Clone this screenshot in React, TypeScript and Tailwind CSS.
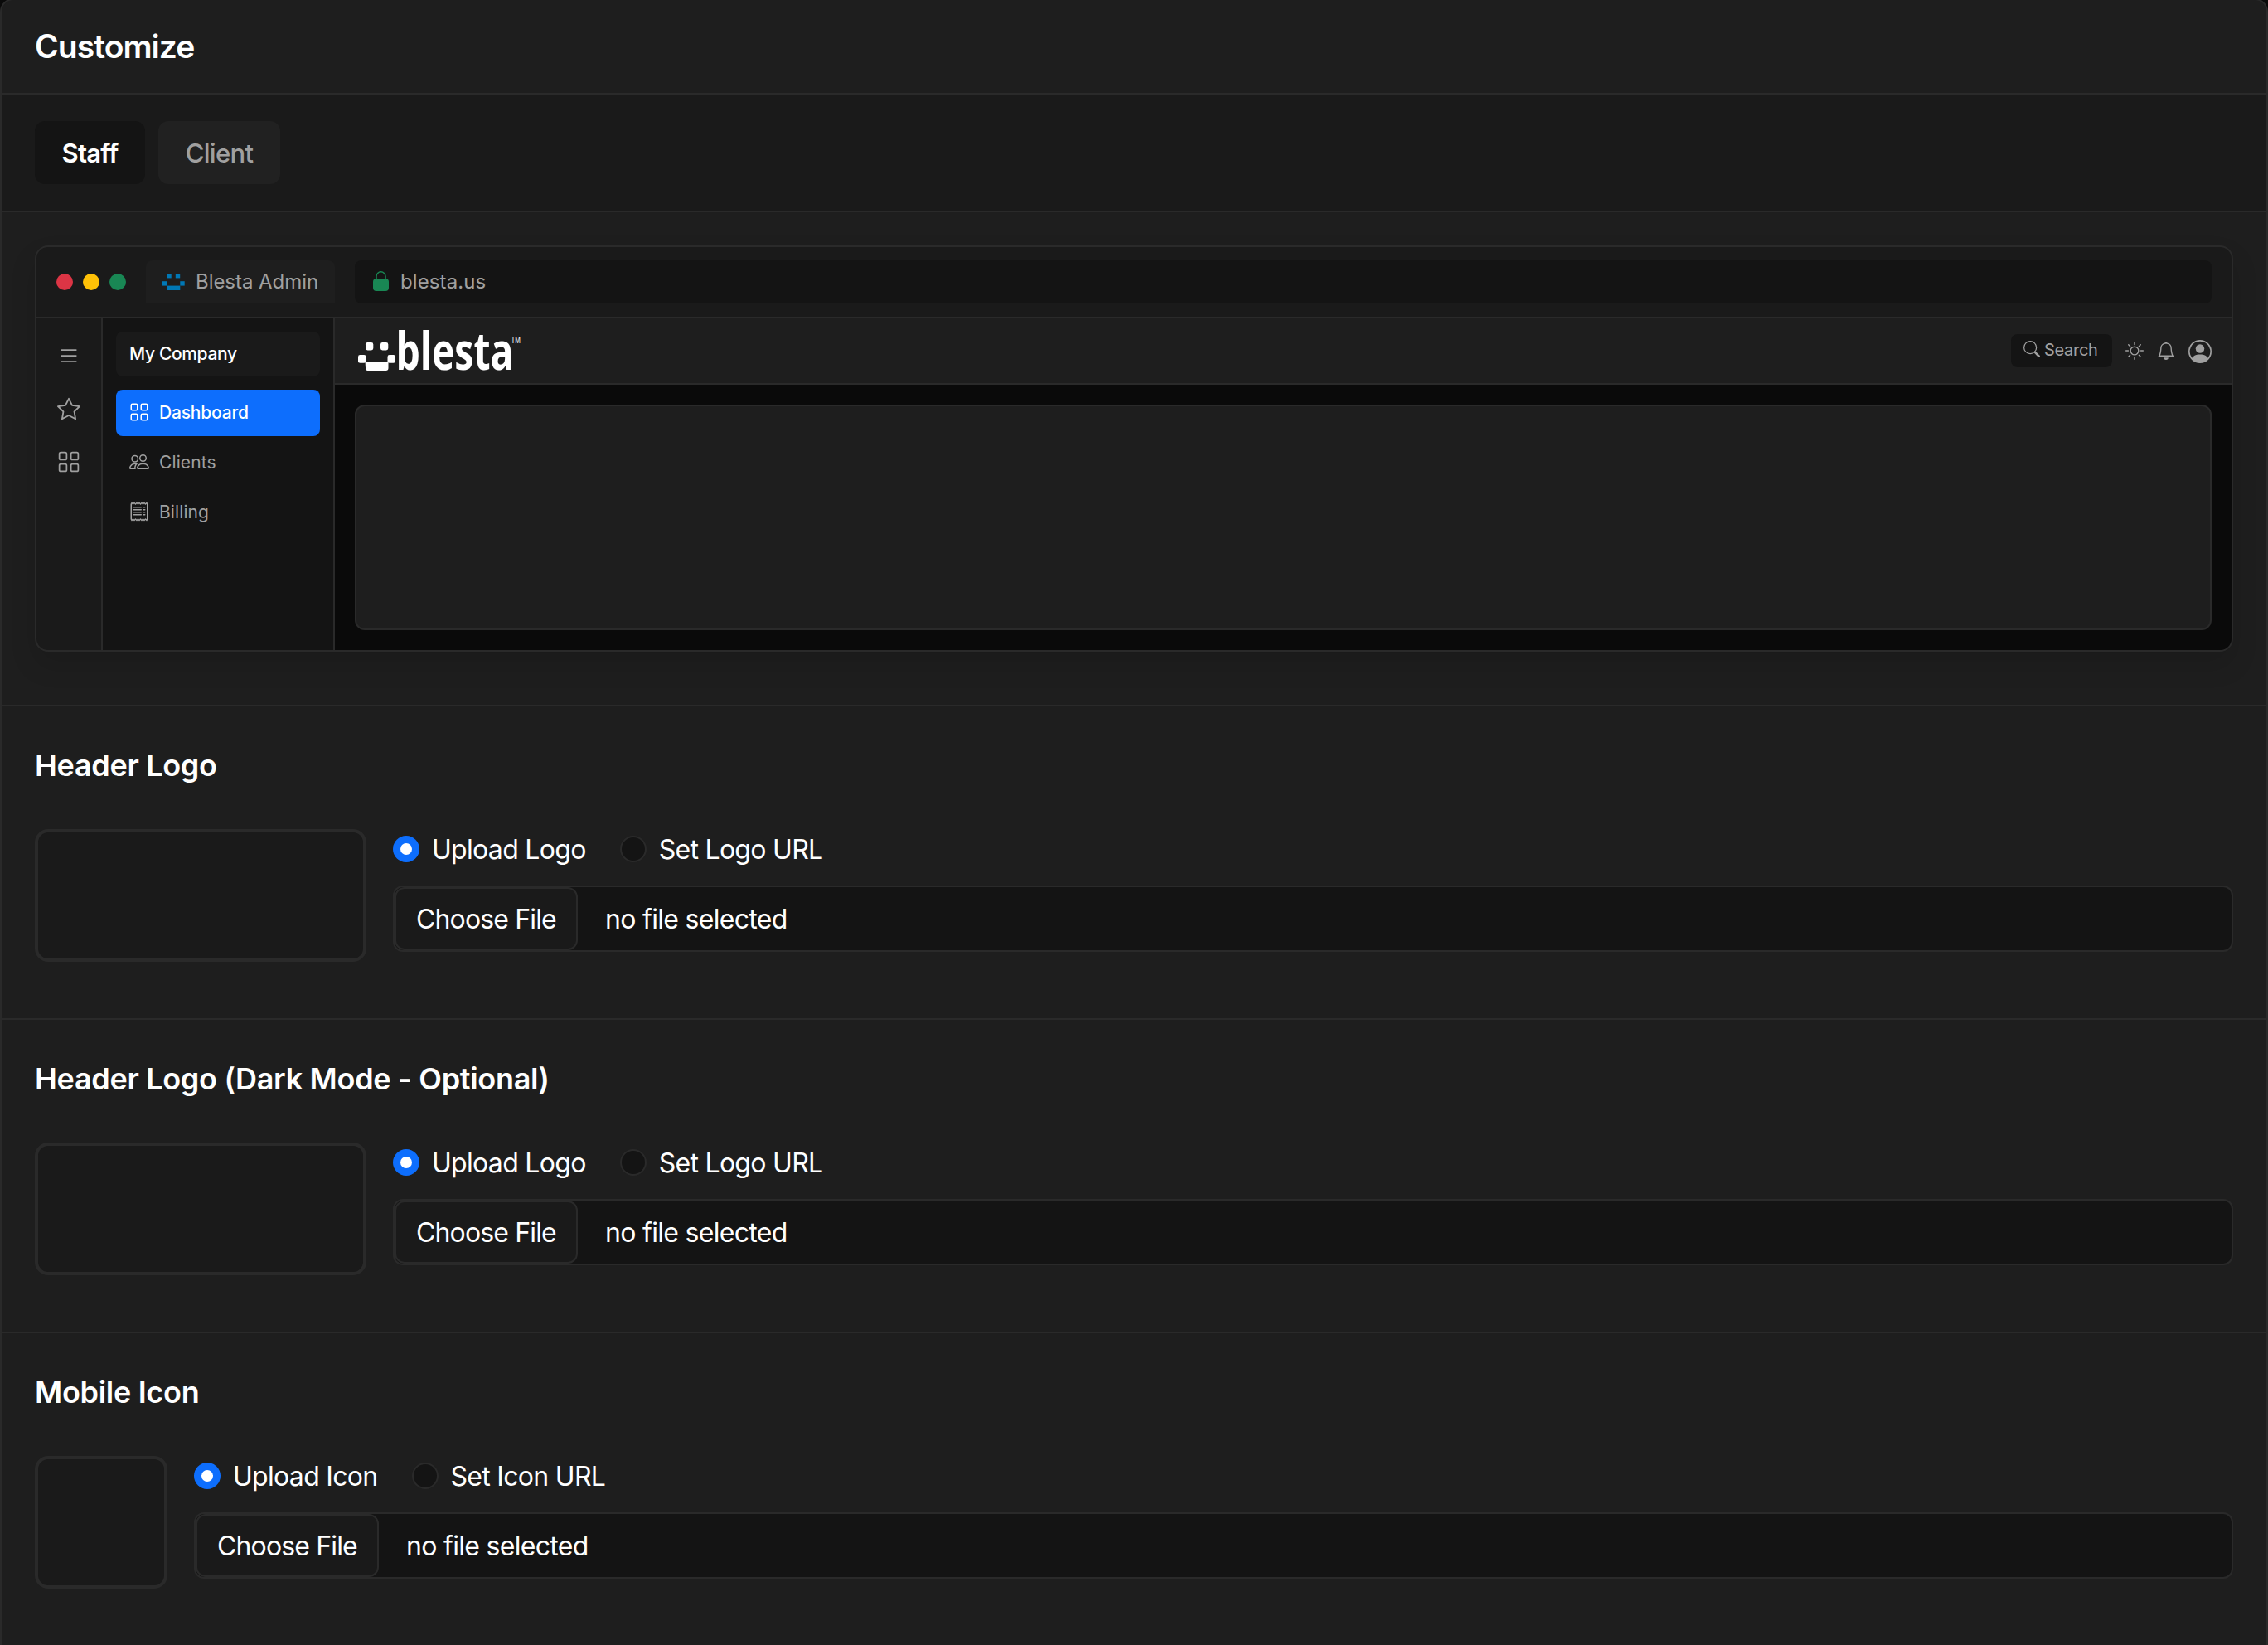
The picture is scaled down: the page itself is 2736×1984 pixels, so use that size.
import React from "react";
import {
  BsBell,
  BsGrid,
  BsList,
  BsPeople,
  BsPersonCircle,
  BsReceipt,
  BsStar,
  BsSun,
} from "react-icons/bs";

type UploadSection = {
  title: string;
  name: string;
  upload: string;
  url: string;
  square?: boolean;
};

const sections: UploadSection[] = [
  { title: "Header Logo", name: "logo", upload: "Upload Logo", url: "Set Logo URL" },
  {
    title: "Header Logo (Dark Mode - Optional)",
    name: "logo_dark",
    upload: "Upload Logo",
    url: "Set Logo URL",
  },
  { title: "Mobile Icon", name: "icon", upload: "Upload Icon", url: "Set Icon URL", square: true },
];

const nav = [
  { label: "Dashboard", icon: BsGrid, active: true },
  { label: "Clients", icon: BsPeople },
  { label: "Billing", icon: BsReceipt },
];

const Favicon = () => (
  <svg width="27" height="20" viewBox="0 0 27 20" fill="#0078b6">
    <rect x="5.3" y="0" width="5.4" height="5.4" />
    <rect x="15.8" y="0" width="5.4" height="5.4" />
    <rect x="0" y="9.2" width="5.4" height="5.4" />
    <rect x="21.3" y="9.2" width="5.4" height="5.4" />
    <rect x="5.3" y="14.6" width="16" height="5.4" />
  </svg>
);

const Lock = () => (
  <svg width="19" height="24" viewBox="0 0 19 24" className="-mt-0.5">
    <rect x="0" y="9" width="19" height="15" rx="4" fill="#198754" />
    <path d="M4 10V6.3a5.5 5.5 0 0 1 11 0V10" fill="none" stroke="#198754" strokeWidth="1.5" />
  </svg>
);

const SearchIcon = () => (
  <svg width="20" height="20" viewBox="0 0 16 16" fill="currentColor" className="-mt-0.5">
    <path d="M10.442 10.442a1 1 0 0 1 1.415 0l3.85 3.85a1 1 0 0 1-1.414 1.415l-3.85-3.85a1 1 0 0 1 0-1.415z" />
    <path d="M6.5 12a5.5 5.5 0 1 0 0-11 5.5 5.5 0 0 0 0 11zM13 6.5a6.5 6.5 0 1 1-13 0 6.5 6.5 0 0 1 13 0z" />
  </svg>
);

const Logo = () => (
  <svg width="200" height="50" viewBox="0 0 200 50" fill="#ffffff" className="overflow-visible">
    <rect x="11" y="15" width="9.3" height="9.5" rx="2.4" />
    <rect x="29" y="15" width="9.3" height="9.5" rx="2.4" />
    <rect x="2" y="30" width="9.5" height="9.8" rx="2.4" />
    <rect x="37.5" y="30" width="9.5" height="9.8" rx="2.4" />
    <path d="M10.5 37.5l1.5 1.3h25l1.5-1.3v8.5q0 3-3 3h-22q-2.5 0-2.5-3z" />
    <text
      x="47.5"
      y="48.2"
      textLength="142"
      lengthAdjust="spacingAndGlyphs"
      className="font-['Open_Sans',sans-serif] text-[62px] font-bold"
    >
      blesta
    </text>
    <text
      x="186.5"
      y="16.3"
      textLength="11.5"
      lengthAdjust="spacingAndGlyphs"
      className="font-['Liberation_Sans',sans-serif] text-[10.5px]"
    >
      TM
    </text>
  </svg>
);

const Preview = () => (
  <div className="h-[490px] overflow-hidden rounded-[16px] border-2 border-[#2a2a2a] bg-[#1a1a1a] shadow-[0_16px_32px_rgba(0,0,0,0.12)]">
    <div className="flex h-[86px] items-center border-b-2 border-[#2a2a2a] pr-6 pl-6">
      <div className="flex gap-3">
        <span className="size-5 rounded-full bg-[#dc3545]" />
        <span className="size-5 rounded-full bg-[#ffc107]" />
        <span className="size-5 rounded-full bg-[#198754]" />
      </div>
      <div className="ml-6 flex h-[52px] w-[228px] items-center rounded-t-lg bg-[#1e1e1e] pl-5 text-2xl text-[#a0a0a0]">
        <Favicon />
        <span className="ml-[13px] tracking-[-0.05px] whitespace-nowrap">Blesta Admin</span>
      </div>
      <div className="ml-6 flex h-[52px] flex-1 items-center rounded-lg bg-[#141414] pl-[22px] text-2xl text-[#a0a0a0]">
        <Lock />
        <span className="ml-3.5 tracking-[0.1px]">blesta.us</span>
      </div>
    </div>

    <div className="flex h-[400px]">
      <div className="flex w-20 flex-col items-center gap-9 border-r-2 border-[#2a2a2a] pt-[31px] text-[28px] text-[#a0a0a0]">
        <BsList />
        <BsStar />
        <BsGrid />
      </div>

      <div className="w-[280px] border-r-2 border-[#2a2a2a] bg-[#141414] px-4 pt-4 text-[21px]">
        <div className="mb-4 flex h-[54px] items-center rounded-lg bg-[#1a1a1a] px-4 font-medium tracking-[-0.35px] text-white">
          My Company
        </div>
        <div className="flex flex-col gap-1">
          {nav.map(({ label, icon: Icon, active }) => (
            <div
              key={label}
              className={
                active
                  ? "flex h-14 items-center gap-3 rounded-lg bg-[#0d6efd] px-4 font-medium tracking-[-0.2px] text-white"
                  : "flex h-14 items-center gap-3 rounded-lg px-4 tracking-[0.1px] text-[#a0a0a0]"
              }
            >
              <Icon className="-mt-0.5 size-6" />
              {label}
            </div>
          ))}
        </div>
      </div>

      <div className="flex flex-1 flex-col bg-[#0a0a0a]">
        <div className="flex h-20 items-center justify-between border-b-2 border-[#2a2a2a] bg-[#1e1e1e] pr-6 pl-[26px]">
          <Logo />
          <div className="flex items-center gap-4 text-[22px] text-[#a0a0a0]">
            <div className="flex h-10 w-[122px] items-center gap-[5px] rounded-lg bg-[#141414] pb-0.5 pl-[15px] text-[20px] tracking-[-0.3px]">
              <SearchIcon />
              Search
            </div>
            <BsSun />
            <BsBell />
            <BsPersonCircle className="mt-0.5 size-7" />
          </div>
        </div>
        <div className="mx-6 mt-6 h-[272px] rounded-xl border-2 border-[#2a2a2a] bg-[#1e1e1e]" />
      </div>
    </div>
  </div>
);

const Radio = ({ label, checked }: { label: string; checked?: boolean }) => (
  <label className="flex items-center gap-[15px]">
    {checked ? (
      <span className="flex size-8 items-center justify-center rounded-full bg-[#0d6efd]">
        <span className="size-3.5 rounded-full bg-white" />
      </span>
    ) : (
      <span className="size-8 rounded-full border-2 border-[#2a2a2a] bg-[#141414]" />
    )}
    <span className="-mb-0.5">{label}</span>
  </label>
);

const Upload = ({ title, upload, url, square }: UploadSection) => (
  <section className="h-[378px] border-b-2 border-[#2a2a2a] px-10 pt-[49px]">
    <h3 className="h-11 text-[36px] leading-[44px] font-semibold tracking-[-0.3px]">{title}</h3>
    <div className="mt-[55px] flex">
      <div
        className={
          square
            ? "size-40 rounded-[16px] border-4 border-[#2a2a2a] bg-[#1a1a1a]"
            : "h-40 w-[400px] rounded-[16px] border-4 border-[#2a2a2a] bg-[#1a1a1a]"
        }
      />
      <div className="ml-8 flex-1 pt-2 text-[32px] leading-8 tracking-[-0.7px]">
        <div className="flex h-8 gap-[41px]">
          <Radio label={upload} checked />
          <Radio label={url} />
        </div>
        <div className="mt-7 flex h-20 items-center overflow-hidden rounded-xl border-2 border-[#2a2a2a] bg-[#141414]">
          <span className="flex h-[76px] w-[221px] items-center rounded-xl border-2 border-[#2a2a2a] bg-[#1a1a1a] pt-0.5 pl-6 tracking-[-0.85px]">
            Choose File
          </span>
          <span className="ml-[33px] pt-0.5">no file selected</span>
        </div>
      </div>
    </div>
  </section>
);

export default function App() {
  return (
    <div className="h-[1984px] w-full overflow-hidden bg-[#0a0a0a] font-[Inter,sans-serif] text-white">
      <div className="-mt-0.5 rounded-t-[16px] border-2 border-[#2a2a2a] bg-[#1e1e1e]">
        <div className="flex h-[114px] items-center border-b-2 border-[#2a2a2a] px-10">
          <h2 className="text-[39px] font-semibold tracking-[-0.95px]">Customize</h2>
        </div>

        <div className="flex h-[142px] items-center gap-4 border-b-2 border-[#2a2a2a] bg-[#1a1a1a] px-10 text-[31px]">
          <div className="flex h-[76px] w-[133px] items-center justify-center rounded-xl bg-[#141414] pt-0.5 font-semibold tracking-[-0.8px]">
            Staff
          </div>
          <div className="flex h-[76px] w-[147px] items-center justify-center rounded-xl bg-[#212121] pt-0.5 font-medium tracking-[-0.7px] text-[#a0a0a0]">
            Client
          </div>
        </div>

        <div className="h-[596px] border-b-2 border-[#2a2a2a] px-10 pt-10">
          <Preview />
        </div>

        {sections.map((s) => (
          <Upload key={s.name} {...s} />
        ))}
      </div>
    </div>
  );
}
